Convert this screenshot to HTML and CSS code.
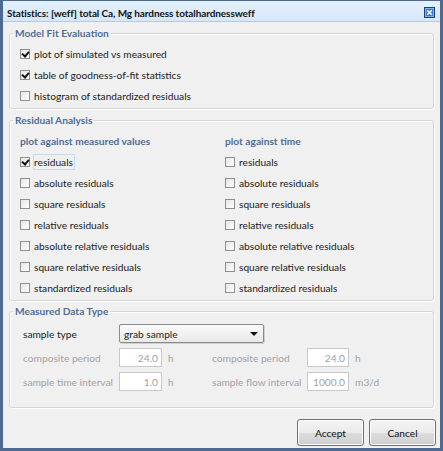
FILE: index.html
```html
<!DOCTYPE html>
<html lang="en">
<head>
    <meta charset="UTF-8">
    <meta name="viewport" content="width=device-width, initial-scale=1.0">
    <title>Statistics</title>
    <link rel="stylesheet" href="styles.css">
</head>
<body>
    <div class="window">
        <div class="titlebar">
            <span class="title">Statistics: [weff] total Ca, Mg hardness totalhardnessweff</span>
            <span class="close-btn">
                <svg width="11" height="11" viewBox="0 0 11 11">
                    <rect x="0.5" y="0.5" width="10" height="10" fill="#3a78c8" stroke="#1d3f73"/>
                    <rect x="1.5" y="1.5" width="8" height="8" fill="none" stroke="#7fb2ea"/>
                    <path d="M3.2 3.2 L7.8 7.8 M7.8 3.2 L3.2 7.8" stroke="#fff" stroke-width="1.5"/>
                </svg>
            </span>
        </div>

        <div class="content">
            <fieldset class="group fit-group">
                <legend>Model Fit Evaluation</legend>
                <div class="check-row"><span class="box checked"></span>plot of simulated vs measured</div>
                <div class="check-row"><span class="box checked"></span>table of goodness-of-fit statistics</div>
                <div class="check-row"><span class="box"></span>histogram of standardized residuals</div>
            </fieldset>

            <fieldset class="group residual-group">
                <legend>Residual Analysis</legend>
                <div class="columns">
                    <div class="col">
                        <div class="col-head">plot against measured values</div>
                        <div class="check-row"><span class="box checked"></span><span class="focused">residuals</span></div>
                        <div class="check-row"><span class="box"></span>absolute residuals</div>
                        <div class="check-row"><span class="box"></span>square residuals</div>
                        <div class="check-row"><span class="box"></span>relative residuals</div>
                        <div class="check-row"><span class="box"></span>absolute relative residuals</div>
                        <div class="check-row"><span class="box"></span>square relative residuals</div>
                        <div class="check-row"><span class="box"></span>standardized residuals</div>
                    </div>
                    <div class="col">
                        <div class="col-head">plot against time</div>
                        <div class="check-row"><span class="box"></span>residuals</div>
                        <div class="check-row"><span class="box"></span>absolute residuals</div>
                        <div class="check-row"><span class="box"></span>square residuals</div>
                        <div class="check-row"><span class="box"></span>relative residuals</div>
                        <div class="check-row"><span class="box"></span>absolute relative residuals</div>
                        <div class="check-row"><span class="box"></span>square relative residuals</div>
                        <div class="check-row"><span class="box"></span>standardized residuals</div>
                    </div>
                </div>
            </fieldset>

            <fieldset class="group data-group">
                <legend>Measured Data Type</legend>
                <div class="data-grid">
                    <span class="field-label row-start">sample type</span>
                    <div class="select">
                        <span>grab sample</span>
                        <span class="arrow"></span>
                    </div>

                    <span class="field-label row-start disabled">composite period</span>
                    <span class="num-input">24.0</span>
                    <span class="unit">h</span>
                    <span class="field-label disabled">composite period</span>
                    <span class="num-input">24.0</span>
                    <span class="unit">h</span>

                    <span class="field-label row-start disabled">sample time interval</span>
                    <span class="num-input">1.0</span>
                    <span class="unit">h</span>
                    <span class="field-label disabled">sample flow interval</span>
                    <span class="num-input">1000.0</span>
                    <span class="unit">m3/d</span>
                </div>
            </fieldset>

            <div class="buttons">
                <button class="btn">Accept</button>
                <button class="btn">Cancel</button>
            </div>
        </div>
    </div>
</body>
</html>
```

FILE: styles.css
```css
* {
    box-sizing: border-box;
}

body {
    margin: 0;
    font-family: 'Lato', sans-serif;
    font-size: 10.2px;
    line-height: 14px;
    color: #1b1b1b;
    background: #4f6a92;
}

.window {
    width: 443px;
    height: 451px;
    border: 3px solid #4f6a92;
    border-top-width: 1px;
    background: #f0f0f0;
    display: flex;
    flex-direction: column;
}

.titlebar {
    height: 21px;
    padding: 3px 5px 0 4px;
    background: linear-gradient(#e4f0fc, #d6e7f9);
    border-bottom: 1px solid #b9c9dc;
    display: flex;
    align-items: center;
    justify-content: space-between;
}

.title {
    font-size: 10px;
    font-weight: bold;
    color: #111;
    letter-spacing: -0.1px;
}

.close-btn {
    display: flex;
}

.content {
    flex: 1;
    padding: 4px 4px 0 6px;
    display: flex;
    flex-direction: column;
}

.group {
    margin: 0 2px 4px 0;
    padding: 3px 10px 2px;
    border: 1px solid #d5d5d5;
    border-radius: 3px;
    box-shadow: inset 1px 1px 0 #fff, 1px 1px 0 #fff;
}

.group legend {
    margin-left: -7px;
    padding: 0 2px;
    line-height: 14px;
    font-weight: bold;
    color: #4e6c96;
}

.check-row {
    height: 21px;
    display: flex;
    align-items: center;
    white-space: nowrap;
}

.box {
    width: 10px;
    height: 10px;
    margin-right: 4px;
    border: 1px solid #8e8f8f;
    background: linear-gradient(135deg, #e6e6e6, #fff);
    flex: none;
    position: relative;
}

.box.checked::after {
    content: "";
    position: absolute;
    left: 2px;
    top: 0px;
    width: 3px;
    height: 5px;
    border-right: 2px solid #111;
    border-bottom: 2px solid #111;
    transform: rotate(40deg);
}

.focused {
    border: 1px solid #c6dbf1;
    padding: 0 1px 0 0;
    margin-left: -1px;
}

.residual-group {
    margin-bottom: 3px;
}

.columns {
    display: grid;
    grid-template-columns: 205px 1fr;
}

.col-head {
    height: 21px;
    display: flex;
    align-items: center;
    font-weight: bold;
    color: #4e6c96;
}

.data-group {
    padding: 6px 10px 16px;
}

.data-grid {
    margin-left: 3px;
    display: grid;
    grid-template-columns: 96px 43px 50px 95px 42px 1fr;
    grid-auto-rows: 19px;
    row-gap: 5px;
    align-items: center;
}

.field-label {
    white-space: nowrap;
}

.row-start {
    grid-column-start: 1;
}

.field-label.disabled {
    color: #a2a2a2;
}

.select {
    grid-column: 2 / span 3;
    width: 145px;
    height: 19px;
    display: flex;
    align-items: center;
    justify-content: space-between;
    padding: 0 5px 0 4px;
    border: 1px solid #8a8a8a;
    border-radius: 2px;
    background: linear-gradient(#fafafa, #e9e9e9);
    box-shadow: 1px 1px 0 #d0d0d0;
}

.arrow {
    width: 0;
    height: 0;
    border-left: 4px solid transparent;
    border-right: 4px solid transparent;
    border-top: 4px solid #111;
}

.num-input {
    height: 19px;
    display: flex;
    align-items: center;
    justify-content: flex-end;
    padding-right: 3px;
    border: 1px solid #c9c9c9;
    background: #fff;
    color: #a2a2a2;
}

.unit {
    padding-left: 6px;
    color: #a2a2a2;
}

.buttons {
    margin-top: 7px;
    display: flex;
    justify-content: flex-end;
    gap: 5px;
}

.btn {
    width: 67px;
    height: 27px;
    font: inherit;
    color: #111;
    border: 1px solid #707070;
    border-radius: 3px;
    background: linear-gradient(#f4f4f4 0%, #ebebeb 50%, #dddddd 51%, #cfcfcf 100%);
    box-shadow: inset 0 0 0 1px #fcfcfc;
}
```
